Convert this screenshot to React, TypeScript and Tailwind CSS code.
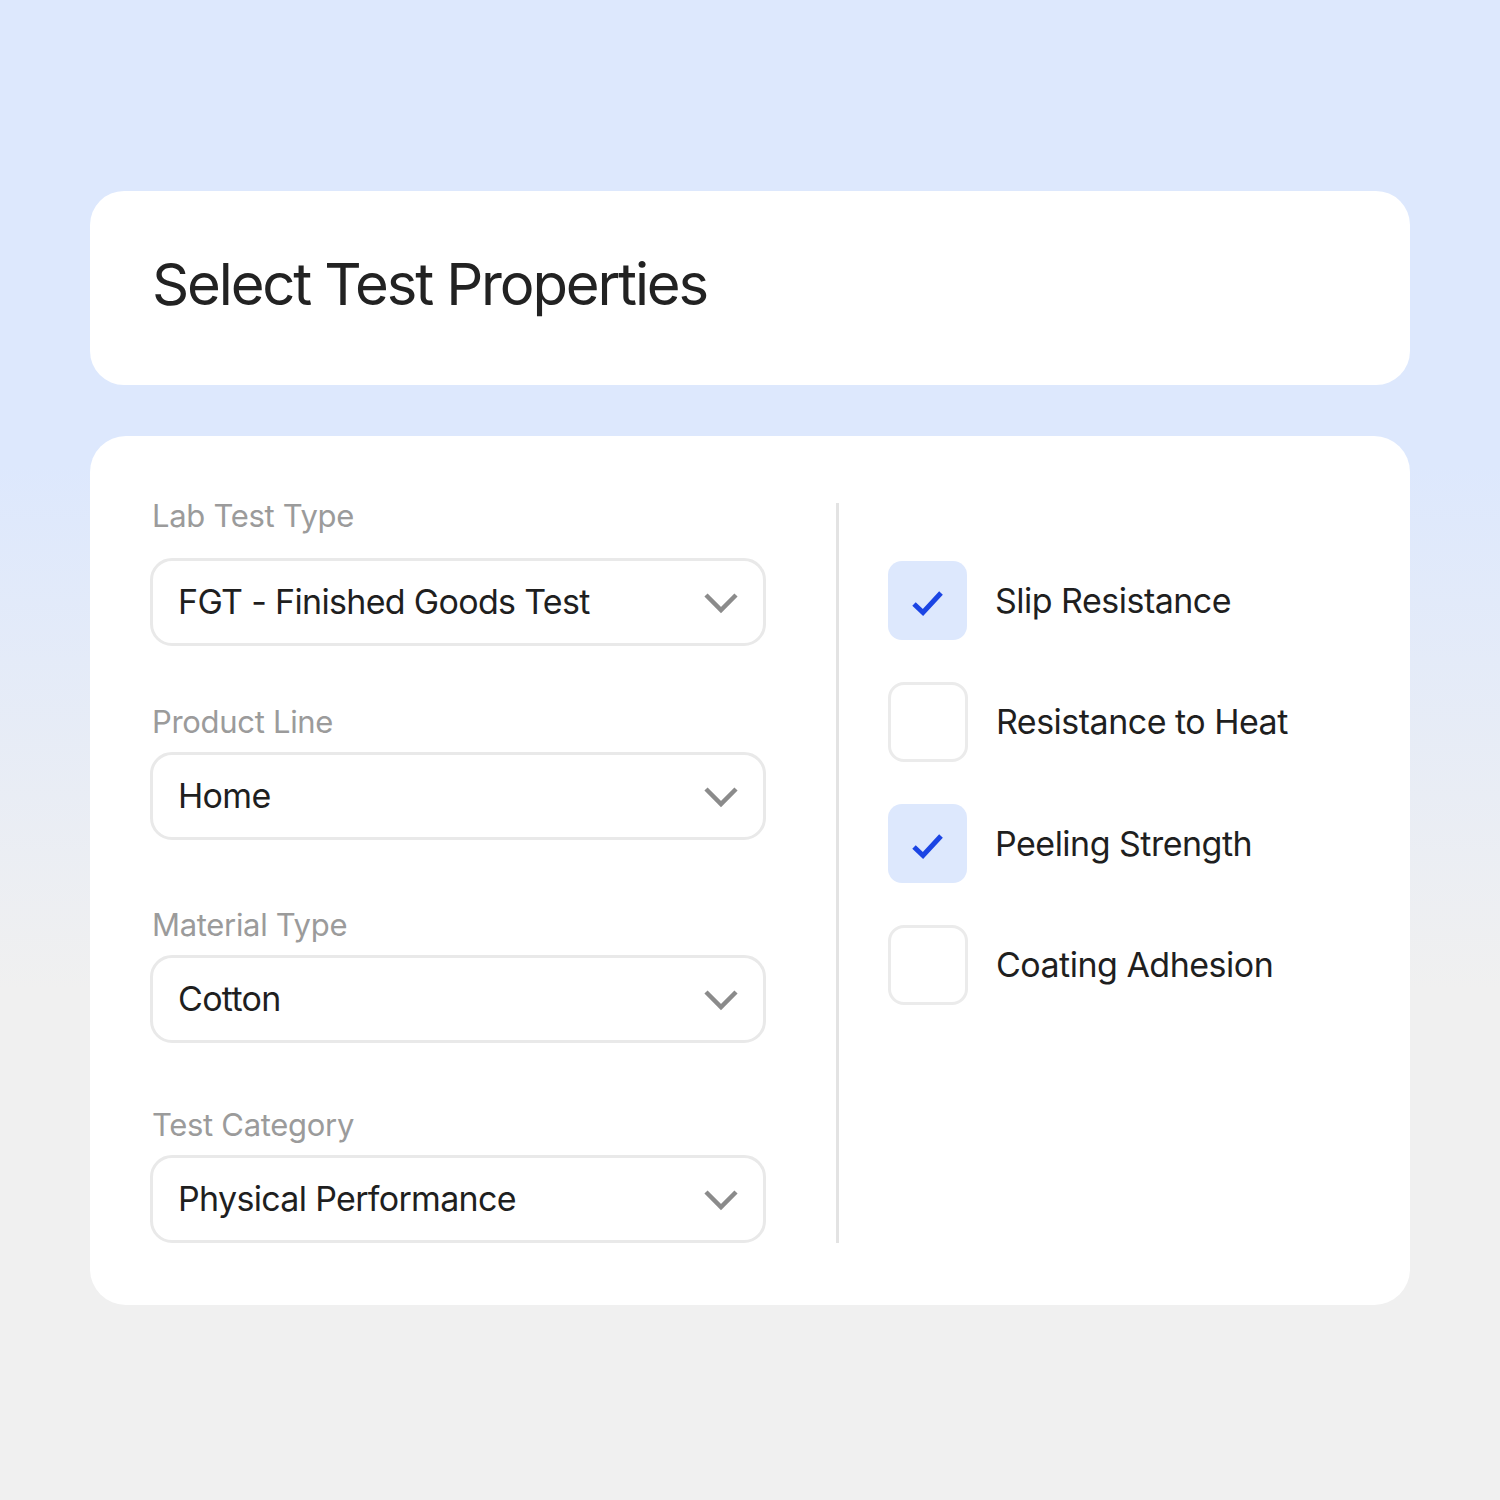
import React from "react";

const fields = [
  { label: "Lab Test Type", value: "FGT - Finished Goods Test", wrap: "", gap: "mt-[24px]" },
  { label: "Product Line", value: "Home", wrap: "mt-[58px]", gap: "mt-[12px]" },
  { label: "Material Type", value: "Cotton", wrap: "mt-[67px]", gap: "mt-[12px]" },
  { label: "Test Category", value: "Physical Performance", wrap: "mt-[64px]", gap: "mt-[12px]" },
];

const properties = [
  { name: "Slip Resistance", checked: true },
  { name: "Resistance to Heat", checked: false },
  { name: "Peeling Strength", checked: true },
  { name: "Coating Adhesion", checked: false },
];

function Chevron() {
  return (
    <svg width="34" height="22" viewBox="0 0 34 22" fill="none" className="mt-[2px] shrink-0">
      <path d="M2 3 L17 18 L32 3" stroke="#8b8b8b" strokeWidth="4.5" />
    </svg>
  );
}

function SelectBox({ value }: { value: string }) {
  return (
    <div className="flex h-[88px] items-center justify-between rounded-[22px] border-[3px] border-[#e9e9e9] bg-white pl-[25px] pr-[25px]">
      <span className="text-[34px] leading-none tracking-[-0.02em] text-[#1f1f1f]">{value}</span>
      <Chevron />
    </div>
  );
}

function CheckBox({ checked }: { checked: boolean }) {
  if (checked) {
    return (
      <div className="flex h-[79px] w-[79px] shrink-0 items-center justify-center rounded-[14px] bg-[#dde8fd]">
        <svg width="79" height="79" viewBox="0 0 79 79" fill="none">
          <path d="M26 43 L35 51.5 L53 32" stroke="#1b45e4" strokeWidth="5" />
        </svg>
      </div>
    );
  }
  return <div className="h-[80px] w-[80px] shrink-0 rounded-[16px] border-[3px] border-[#ebebeb] bg-white" />;
}

export default function App() {
  return (
    <div
      className="min-h-[1500px] w-full bg-[linear-gradient(180deg,#dde8fd_0%,#dde8fd_31%,#f0f0f0_66%,#f0f0f0_100%)] px-[90px] pt-[191px]"
      style={{ fontFamily: "Inter, 'Noto Sans', sans-serif" }}
    >
      <div className="flex h-[194px] items-center rounded-[34px] bg-white pb-[8px] pl-[62px]">
        <h1 className="text-[58px] leading-none tracking-[-0.037em] text-[#222222]">Select Test Properties</h1>
      </div>

      <div className="mt-[51px] flex rounded-[36px] bg-white pb-[62px] pl-[60px] pt-[62px]">
        <div className="flex w-[616px] flex-col">
          {fields.map((f) => (
            <div key={f.label} className={f.wrap}>
              <div className="pl-[2px] text-[31px] leading-[36px] tracking-[-0.01em] text-[#9b9b9b]">{f.label}</div>
              <div className={f.gap}>
                <SelectBox value={f.value} />
              </div>
            </div>
          ))}
        </div>

        <div className="ml-[70px] mt-[5px] w-[3px] bg-[#e3e3e3]" />

        <div className="ml-[49px] flex flex-col gap-[42px] pt-[63px]">
          {properties.map((p) => (
            <div key={p.name} className="flex items-center gap-[28px]">
              <CheckBox checked={p.checked} />
              <span className="text-[34px] leading-none tracking-[-0.015em] text-[#1f1f1f]">{p.name}</span>
            </div>
          ))}
        </div>
      </div>
    </div>
  );
}
